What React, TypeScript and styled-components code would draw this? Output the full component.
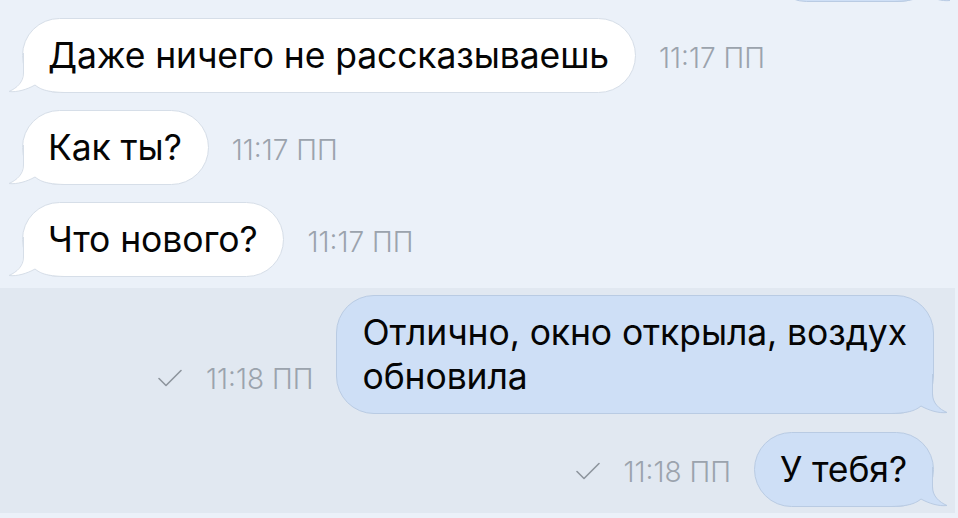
import React from "react";
import styled, { createGlobalStyle } from "styled-components";

const GlobalStyle = createGlobalStyle`
  html, body {
    margin: 0;
    padding: 0;
    background: #ebf1f9;
  }
  body {
    font-family: Inter, "Liberation Sans", Arial, sans-serif;
  }
`;

const Screen = styled.div`
  width: 958px;
  height: 518px;
  overflow: hidden;
  background: #ebf1f9;
  display: flex;
  flex-direction: column;
`;

const Incoming = styled.div`
  display: flex;
  flex-direction: column;
  gap: 17px;
  padding: 16px 0 11px 22px;
`;

const Selected = styled.div`
  width: 955px;
  box-sizing: border-box;
  background: #e1e8f1;
  display: flex;
  flex-direction: column;
  align-items: flex-end;
  gap: 18px;
  padding: 7px 21px 6px 0;
`;

const Row = styled.div<{ $out?: boolean }>`
  display: flex;
  flex-direction: ${(p) => (p.$out ? "row-reverse" : "row")};
  align-items: last baseline;
  gap: 23px;
`;

const Clipped = styled.div`
  align-self: flex-end;
  margin: -73px 21px 0 0;
`;

const Bubble = styled.div<{ $out?: boolean }>`
  position: relative;
  box-sizing: border-box;
  max-width: 640px;
  min-height: 75px;
  padding: 15px 26px 14px 25px;
  border-radius: 38px;
  background: ${(p) => (p.$out ? "#cedff6" : "#ffffff")};
  border: 1px solid ${(p) => (p.$out ? "#b9cbe3" : "#d6dee8")};
  color: #050505;
  font-size: 35.5px;
  line-height: 44px;
  letter-spacing: -0.1px;
  white-space: pre-line;
`;

const Text = styled.span`
  position: relative;
`;

const TailSvg = styled.svg<{ $out?: boolean }>`
  position: absolute;
  bottom: -1px;
  ${(p) => (p.$out ? "right: -15px; transform: scaleX(-1);" : "left: -15px;")}
  width: 56px;
  height: 40px;
  overflow: visible;
`;

const Meta = styled.div`
  display: flex;
  align-items: center;
  gap: 24px;
  color: #9ba3ad;
  font-size: 28px;
  font-weight: 300;
  line-height: 30px;
  letter-spacing: 0;
  white-space: nowrap;
`;

const Check = styled.svg`
  width: 24px;
  height: 18px;
  transform: translateY(-1px);
`;

function Tail({ out }: { out?: boolean }) {
  const fill = out ? "#cedff6" : "#ffffff";
  const stroke = out ? "#b9cbe3" : "#d6dee8";
  return (
    <TailSvg $out={out} viewBox="0 0 56 40">
      <path
        d="M15,0 L15,20 C15,29 9,35 1,38.5 C9,39.5 19,36.5 27,32 C32,36 38,39 56,39.5 L56,0 Z"
        fill={fill}
      />
      <path
        d="M15.5,0 L15.5,20 C15.5,29 9,35 1,38.5 C9,39.5 19,36.5 27,32 C32,36 38,39 56,39.5"
        fill="none"
        stroke={stroke}
        strokeWidth={1}
      />
    </TailSvg>
  );
}

type Msg = { text: string; time: string; out?: boolean };

function Message({ text, time, out }: Msg) {
  return (
    <Row $out={out}>
      <Bubble $out={out}>
        <Tail out={out} />
        <Text>{text}</Text>
      </Bubble>
      <Meta>
        {out && (
          <Check viewBox="0 0 24 18">
            <polyline
              points="1,9.5 8,16.5 23,1.5"
              fill="none"
              stroke="#8e959e"
              strokeWidth={1.6}
              strokeLinecap="round"
              strokeLinejoin="round"
            />
          </Check>
        )}
        <span>{time}</span>
      </Meta>
    </Row>
  );
}

const incoming: Msg[] = [
  { text: "Даже ничего не рассказываешь", time: "11:17 ПП" },
  { text: "Как ты?", time: "11:17 ПП" },
  { text: "Что нового?", time: "11:17 ПП" },
];

const outgoing: Msg[] = [
  { text: "Отлично, окно открыла, воздух\nобновила", time: "11:18 ПП", out: true },
  { text: "У тебя?", time: "11:18 ПП", out: true },
];

export default function App() {
  return (
    <>
      <GlobalStyle />
      <Screen>
        <Clipped>
          <Bubble $out style={{ width: 168 }}>
            <Tail out />
          </Bubble>
        </Clipped>
        <Incoming>
          {incoming.map((m, i) => (
            <Message key={i} {...m} />
          ))}
        </Incoming>
        <Selected>
          {outgoing.map((m, i) => (
            <Message key={i} {...m} />
          ))}
        </Selected>
      </Screen>
    </>
  );
}
